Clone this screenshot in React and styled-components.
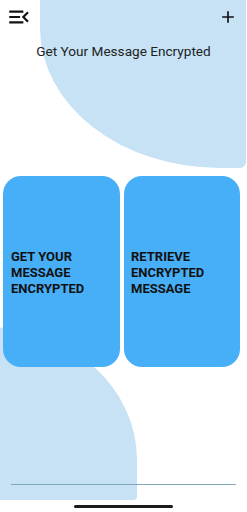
import React from "react"
import styled, { createGlobalStyle } from "styled-components"

const lightBlue = "#c6e2f4"
const cardBlue = "#47aff7"

const GlobalStyle = createGlobalStyle`
  *, *::before, *::after {
    box-sizing: border-box;
  }
  html, body {
    margin: 0;
    padding: 0;
    background: #fff;
  }
  body {
    font-family: Roboto, "Liberation Sans", sans-serif;
  }
`

const Screen = styled.div`
  position: relative;
  width: 247px;
  height: 512px;
  overflow: hidden;
  background: #fff;
`

// decorative background shapes sitting behind the content
const TopBlob = styled.div`
  position: absolute;
  left: 40px;
  top: 0;
  width: 206px;
  height: 168px;
  background: ${lightBlue};
  border-bottom-left-radius: 180px 140px;
  border-bottom-right-radius: 6px;
  z-index: 0;
`

const BottomBlob = styled.div`
  position: absolute;
  left: -13px;
  top: 327px;
  width: 150px;
  height: 173px;
  background: ${lightBlue};
  border-top-right-radius: 150px 133px;
  border-bottom-right-radius: 4px;
  z-index: 0;
`

const Content = styled.div`
  position: relative;
  z-index: 1;
  display: flex;
  flex-direction: column;
  height: 100%;
`

const Header = styled.div`
  display: flex;
  justify-content: space-between;
  align-items: flex-start;
  height: 30px;
  padding: 0 9px 0 6px;
`

const IconButton = styled.button`
  border: 0;
  background: none;
  padding: 0;
  margin-top: ${p => p.top}px;
  display: flex;
  color: #111;
  cursor: pointer;
`

const Title = styled.div`
  margin-top: 13px;
  text-align: center;
  font-size: 13.6px;
  line-height: 16px;
  color: #222;
`

const Cards = styled.div`
  display: grid;
  grid-template-columns: 117px 116px;
  gap: 4px;
  margin-top: 117px;
  padding-left: 3px;
`

const Card = styled.div`
  height: 191px;
  background: ${cardBlue};
  border-radius: 18px;
  display: flex;
  align-items: center;
  padding-left: ${p => p.indent}px;
  padding-top: 2px;
  font-size: 13px;
  line-height: 16px;
  font-weight: 700;
  color: #111;
  text-transform: uppercase;
`

const Divider = styled.div`
  margin: 117px 11px 0;
  height: 1px;
  background: #7fa8bd;
`

const HomeBar = styled.div`
  margin: 20px auto 0;
  width: 99px;
  height: 3px;
  border-radius: 2px;
  background: #1a1a1a;
`

const MenuOpenIcon = () => (
  <svg width="26" height="26" viewBox="0 0 24 24" fill="currentColor">
    <path d="M3 18h13v-2H3v2zm0-5h10v-2H3v2zm0-7v2h13V6H3zm18 9.59L17.42 12 21 8.41 19.59 7l-5 5 5 5L21 15.59z" />
  </svg>
)

const AddIcon = () => (
  <svg width="20" height="20" viewBox="0 0 24 24" fill="currentColor">
    <path d="M19 13h-6v6h-2v-6H5v-2h6V5h2v6h6v2z" />
  </svg>
)

const App = () => {
  return (
    <>
      <GlobalStyle />
      <Screen>
        <TopBlob />
        <BottomBlob />
        <Content>
          <Header>
            <IconButton top={4}>
              <MenuOpenIcon />
            </IconButton>
            <IconButton top={7}>
              <AddIcon />
            </IconButton>
          </Header>
          <Title>Get Your Message Encrypted</Title>
          <Cards>
            <Card indent={8}>
              Get your
              <br />
              message
              <br />
              encrypted
            </Card>
            <Card indent={7}>
              Retrieve
              <br />
              encrypted
              <br />
              message
            </Card>
          </Cards>
          <Divider />
          <HomeBar />
        </Content>
      </Screen>
    </>
  )
}

export default App
